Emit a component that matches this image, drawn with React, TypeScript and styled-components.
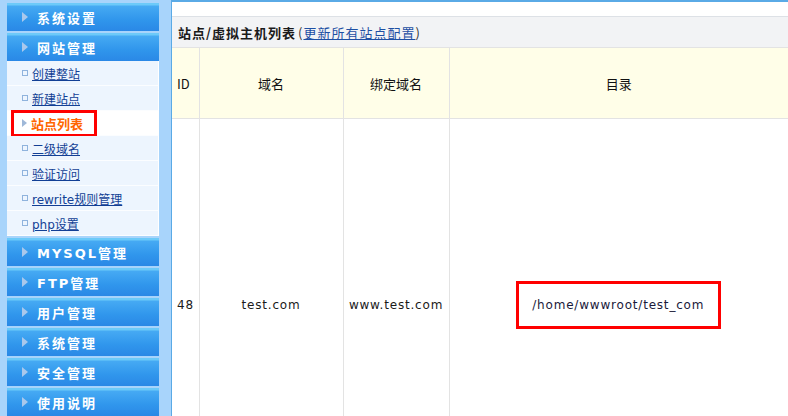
import React from 'react';
import styled, { createGlobalStyle } from 'styled-components';

const GlobalStyle = createGlobalStyle`
  html, body {
    margin: 0;
    padding: 0;
    background: #a8d4fb;
    font-family: "Noto Sans CJK SC", "DejaVu Sans", sans-serif;
    overflow: hidden;
  }
`;

const menuTop = ['系统设置'];
const subItems = ['创建整站', '新建站点', '站点列表', '二级域名', '验证访问', 'rewrite规则管理', 'php设置'];
const menuBottom = ['MYSQL管理', 'FTP管理', '用户管理', '系统管理', '安全管理', '使用说明'];
const activeItem = '站点列表';

const Page = styled.div`
  display: flex;
  height: 416px;
  overflow: hidden;
`;

const Sidebar = styled.nav`
  width: 152px;
  margin-left: 7px;
  padding-top: 3px;
  display: flex;
  flex-direction: column;
  gap: 2px;
  flex-shrink: 0;
`;

const MenuHeader = styled.div`
  height: 28px;
  flex-shrink: 0;
  box-sizing: border-box;
  display: flex;
  align-items: center;
  padding-left: 15px;
  background: linear-gradient(
    to bottom,
    #6ccaf9 0,
    #6ccaf9 2px,
    #46aaf3 3px,
    #3096ec 60%,
    #2a88e6 100%
  );
  color: #fff;
  font-family: "DejaVu Sans", "Noto Sans CJK SC", sans-serif;
  font-weight: bold;
  font-size: 13px;
  letter-spacing: 2px;
`;

const Arrow = styled.span<{ $color?: string; $size?: number }>`
  width: 0;
  height: 0;
  border-top: ${(p) => p.$size ?? 5}px solid transparent;
  border-bottom: ${(p) => p.$size ?? 5}px solid transparent;
  border-left: ${(p) => (p.$size ?? 5) + 1}px solid ${(p) => p.$color ?? '#a9c8ec'};
  margin-right: ${(p) => (p.$size === 4 ? 4 : 9)}px;
`;

const SubList = styled.div`
  display: flex;
  flex-direction: column;
  margin-top: -2px;
  flex-shrink: 0;
`;

const SubItem = styled.div`
  height: 25px;
  box-sizing: border-box;
  display: flex;
  align-items: center;
  padding-left: 15px;
  background: #edf5fe;
  border-bottom: 1px solid #fbfdff;
  border-right: 1px solid #fff;
  font-family: "DejaVu Sans", "Noto Sans CJK SC", sans-serif;
  font-size: 12px;
`;

const ActiveItem = styled(SubItem)`
  padding-left: 0;
  background: #fff;
`;

const Highlight = styled.span`
  display: flex;
  align-items: center;
  box-sizing: border-box;
  height: 27px;
  margin-left: 4px;
  padding: 0 11px 0 8px;
  border: 3px solid #ff0000;
`;

const Bullet = styled.span`
  width: 4px;
  height: 4px;
  border: 1px solid #8fb3dd;
  margin-right: 4px;
`;

const SubLink = styled.a`
  color: #123f95;
  text-decoration: underline;
  cursor: pointer;
`;

const ActiveLink = styled.span`
  color: #ff6600;
  font-weight: bold;
  font-size: 13px;
`;

const Main = styled.main`
  flex: 1;
  margin-left: 12px;
  background: #fff;
  border-left: 1px solid #5aaae6;
  border-top: 2px solid #5aaae6;
  display: flex;
  flex-direction: column;
`;

const Spacer = styled.div`
  height: 14px;
  flex-shrink: 0;
  border-bottom: 1px solid #dde1e6;
`;

const TitleBar = styled.div`
  height: 30px;
  flex-shrink: 0;
  display: flex;
  align-items: center;
  gap: 2px;
  padding-left: 6px;
  background: #f2f3f5;
  font-size: 13px;
  letter-spacing: 1px;
  color: #333;
`;

const Title = styled.strong`
  color: #1a1a1a;
`;

const TitleLink = styled.a`
  color: #1d4fa3;
  text-decoration: underline;
  cursor: pointer;
`;

const Table = styled.table`
  border-collapse: collapse;
  width: 100%;
  table-layout: fixed;
  flex-shrink: 0;
  font-size: 13px;
  color: #111;
`;

const HeadRow = styled.tr`
  height: 71px;
  background: #fffee8;
`;

const Th = styled.th<{ $left?: boolean }>`
  font-weight: normal;
  border: 1px solid #e3e3e3;
  text-align: ${(p) => (p.$left ? 'left' : 'center')};
  padding: ${(p) => (p.$left ? '0 0 0 5px' : '0')};
  &:first-child { border-left: none; }
  &:last-child { border-right: none; }
`;

const DataRow = styled.tr`
  height: 372px;
`;

const Td = styled.td<{ $left?: boolean }>`
  border: 1px solid #e3e3e3;
  text-align: ${(p) => (p.$left ? 'left' : 'center')};
  padding: ${(p) => (p.$left ? '0 0 0 5px' : '0')};
  font-family: "DejaVu Sans", "Noto Sans CJK SC", sans-serif;
  font-size: 12px;
  letter-spacing: 0.8px;
  color: #1a1a1a;
  &:first-child { border-left: none; }
  &:last-child { border-right: none; }
`;

const PathBox = styled.span`
  display: inline-block;
  border: 3px solid #ff0000;
  padding: 14px 14px 14px 13px;
  line-height: 14px;
  color: #1a1a3a;
`;

const App: React.FC = () => {
  return (
    <>
      <GlobalStyle />
      <Page>
        <Sidebar>
          {menuTop.map((m) => (
            <MenuHeader key={m}>
              <Arrow />
              {m}
            </MenuHeader>
          ))}
          <MenuHeader>
            <Arrow />
            网站管理
          </MenuHeader>
          <SubList>
            {subItems.map((s) =>
              s === activeItem ? (
                <ActiveItem key={s}>
                  <Highlight>
                    <Arrow $size={4} $color="#9fb8d8" />
                    <ActiveLink>{s}</ActiveLink>
                  </Highlight>
                </ActiveItem>
              ) : (
                <SubItem key={s}>
                  <Bullet />
                  <SubLink>{s}</SubLink>
                </SubItem>
              )
            )}
          </SubList>
          {menuBottom.map((m) => (
            <MenuHeader key={m}>
              <Arrow />
              {m}
            </MenuHeader>
          ))}
        </Sidebar>
        <Main>
          <Spacer />
          <TitleBar>
            <Title>站点/虚拟主机列表</Title>
            <span>
              (<TitleLink>更新所有站点配置</TitleLink>)
            </span>
          </TitleBar>
          <Table>
            <colgroup>
              <col style={{ width: 27 }} />
              <col style={{ width: 144 }} />
              <col style={{ width: 106 }} />
              <col />
            </colgroup>
            <thead>
              <HeadRow>
                <Th $left>ID</Th>
                <Th>域名</Th>
                <Th>绑定域名</Th>
                <Th>目录</Th>
              </HeadRow>
            </thead>
            <tbody>
              <DataRow>
                <Td $left>48</Td>
                <Td>test.com</Td>
                <Td>www.test.com</Td>
                <Td>
                  <PathBox>/home/wwwroot/test_com</PathBox>
                </Td>
              </DataRow>
            </tbody>
          </Table>
        </Main>
      </Page>
    </>
  );
};

export default App;
